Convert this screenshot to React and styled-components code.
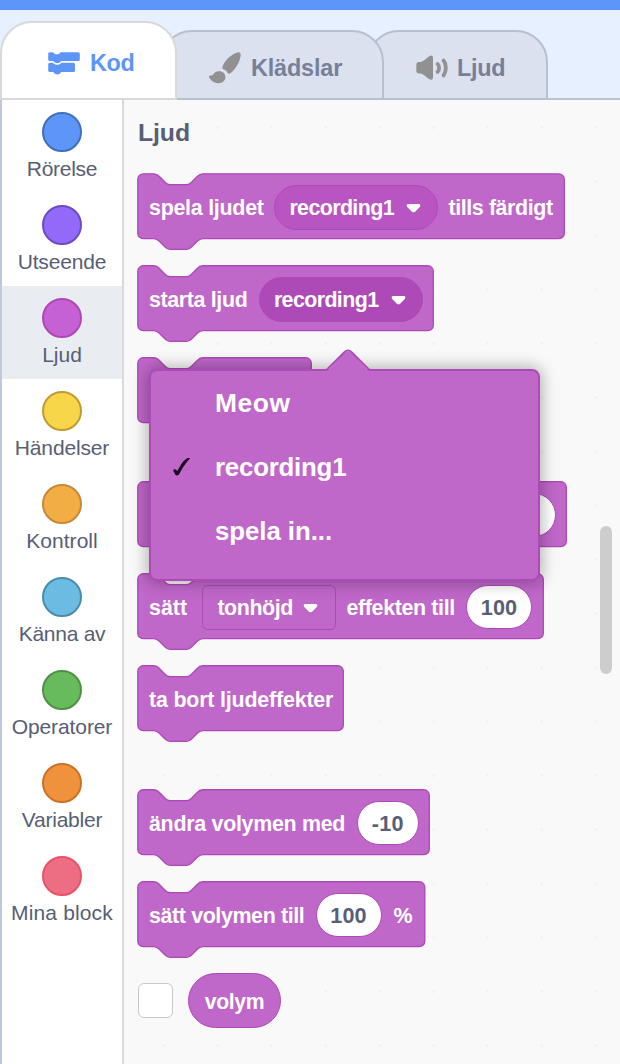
import React from "react";
import styled, { createGlobalStyle } from "styled-components";

const FILL = "#c067ca";
const STROKE = "#ae4ab7";
const INK = "#575e75";

const GlobalStyle = createGlobalStyle`
  * { box-sizing: border-box; }
  body { margin: 0; overflow: hidden; }
`;

const Page = styled.div`
  display: flex;
  flex-direction: column;
  width: 620px;
  height: 1064px;
  overflow: hidden;
  background: #e6f0ff;
  font-family: "Liberation Sans", Helvetica, Arial, sans-serif;
  color: ${INK};
`;

const MenuBar = styled.header`
  flex: none;
  height: 10px;
  background: #5e96f8;
`;

const TabList = styled.nav`
  flex: none;
  display: flex;
  align-items: flex-end;
  height: 90px;
  border-bottom: 2px solid #bcc3d0;
`;

const Tab = styled.div`
  position: relative;
  z-index: ${(p) => p.$z};
  display: flex;
  align-items: center;
  width: ${(p) => p.$w}px;
  height: ${(p) => (p.$active ? 79 : 70)}px;
  margin: 0 0 -2px ${(p) => (p.$active ? 0 : -17)}px;
  padding: ${(p) => (p.$active ? "5px 0 0 46px" : `6px 0 0 ${p.$pad}px`)};
  gap: ${(p) => p.$gap}px;
  border: 2px solid ${(p) => (p.$active ? "#d9d9d9" : "#b9c0cd")};
  border-radius: 32px 32px 0 0;
  background: ${(p) => (p.$active ? "#fff" : "#dbe1ef")};
  color: ${(p) => (p.$active ? "#5e96f8" : "#787f98")};
  font-size: 23.4px;
  font-weight: 700;
  line-height: 28px;
  letter-spacing: ${(p) => p.$ls || 0}px;
  svg { flex: none; display: block; }
`;

const Workspace = styled.main`
  flex: 1;
  display: flex;
  min-height: 0;
`;

const Categories = styled.aside`
  flex: none;
  width: 124px;
  border-left: 2px solid #bfc8dc;
  border-right: 2px solid #d9d9d9;
  background: #fff;
`;

const Category = styled.div`
  display: flex;
  flex-direction: column;
  align-items: center;
  height: 93px;
  padding-top: 12px;
  background: ${(p) => (p.$selected ? "#e9edf1" : "transparent")};
  font-size: 21px;
  line-height: 24px;
  letter-spacing: ${(p) => p.$ls}px;
  white-space: nowrap;
`;

const Bubble = styled.div`
  width: 40px;
  height: 40px;
  margin-bottom: 5px;
  border: 2px solid ${(p) => p.$edge};
  border-radius: 50%;
  background: ${(p) => p.$color};
`;

const Flyout = styled.section`
  position: relative;
  flex: 1;
  padding: 19px 0 0 14px;
  background: #f9f9f9 radial-gradient(circle at 27px 27px, #ededed 0.9px, transparent 1.5px) 12.6px 0.7px / 54px 54px;
`;

const Heading = styled.h2`
  margin: 0 0 27px;
  font-size: 24.8px;
  line-height: 28px;
  font-weight: 700;
  letter-spacing: -0.1px;
`;

const BlockRow = styled.div`
  position: relative;
  display: flex;
  align-items: center;
  width: ${(p) => p.$w}px;
  height: 65px;
  margin-bottom: ${(p) => (p.$last ? 59 : 27)}px;
  padding: 1px 0 0 11px;
  color: #fff;
`;

const Shape = styled.svg`
  position: absolute;
  left: -1px;
  top: -1px;
  overflow: visible;
`;

const Label = styled.span`
  position: relative;
  flex: none;
  width: ${(p) => p.$w}px;
  padding-top: 1px;
  font-size: 21.4px;
  line-height: 26px;
  font-weight: 700;
  letter-spacing: ${(p) => p.$ls || 0}px;
  white-space: nowrap;
`;

const Dropdown = styled.span`
  position: relative;
  flex: none;
  display: flex;
  align-items: center;
  width: ${(p) => p.$w}px;
  height: 45px;
  margin: 0 10.5px 0 ${(p) => p.$ml}px;
  padding-left: 14.4px;
  border: 1.35px solid ${STROKE};
  border-radius: ${(p) => (p.$square ? 5.4 : 23)}px;
  background: ${(p) => p.$bg};
`;

const NumberInput = styled.span`
  position: relative;
  flex: none;
  display: flex;
  align-items: center;
  justify-content: center;
  width: ${(p) => p.$w}px;
  height: 44px;
  margin: 0 12px 0 11.5px;
  padding-top: 1px;
  border: 1.35px solid ${STROKE};
  border-radius: 22px;
  background: #fff;
  color: ${INK};
  font-size: 21.6px;
  font-weight: 700;
  letter-spacing: 0.2px;
`;

const MonitorRow = styled.div`
  display: flex;
  align-items: center;
  gap: 15px;
  margin-top: -33px;
  height: 55px;
`;

const Checkbox = styled.span`
  width: 35px;
  height: 35px;
  border: 1.35px solid #c8c8c8;
  border-radius: 6px;
  background: #fff;
`;

const Reporter = styled.span`
  display: flex;
  align-items: center;
  justify-content: center;
  width: 93px;
  height: 55px;
  padding-top: 2px;
  border: 1.35px solid ${STROKE};
  border-radius: 28px;
  background: ${FILL};
  color: #fff;
  font-size: 21.2px;
  font-weight: 700;
  letter-spacing: -0.35px;
`;

const Popup = styled.div`
  position: absolute;
  left: 25px;
  top: 269px;
  width: 391px;
  height: 212px;
  border: 2px solid ${STROKE};
  border-radius: 8px;
  background: ${FILL};
  box-shadow: 0 0 16px 2px rgba(0, 0, 0, 0.3);
`;

const PopupArrow = styled.svg`
  position: absolute;
  left: 174px;
  top: -22px;
`;

const Option = styled.div`
  display: flex;
  align-items: center;
  height: 64px;
  padding-left: 21px;
  color: #fff;
  font-size: ${(p) => p.$size || 25.8}px;
  font-weight: 700;
  letter-spacing: ${(p) => p.$ls || 0}px;
`;

const CheckSlot = styled.span`
  flex: none;
  display: flex;
  width: 43px;
`;

const Scrollbar = styled.div`
  position: absolute;
  left: 476px;
  top: 426px;
  width: 12px;
  height: 148px;
  border-radius: 6px;
  background: #cdcdcd;
`;

const blockPath = (w) =>
  `M0,4 A4,4 0 0,1 4,0 H12 c2,0 3,1 4,2 l4,4 c1,1 2,2 4,2 h12 c2,0 3,-1 4,-2 l4,-4 c1,-1 2,-2 4,-2 H${w - 4} a4,4 0 0,1 4,4 v40 a4,4 0 0,1 -4,4 H48 c-2,0 -3,1 -4,2 l-4,4 c-1,1 -2,2 -4,2 h-12 c-2,0 -3,-1 -4,-2 l-4,-4 c-1,-1 -2,-2 -4,-2 H4 a4,4 0 0,1 -4,-4 z`;

function Block({ width, last, children }) {
  return (
    <BlockRow $w={width} $last={last}>
      <Shape width={width + 2} height="80">
        <g transform="translate(0.8 0.8) scale(1.35)">
          <path d={blockPath((width - 0.5) / 1.35)} fill={FILL} stroke={STROKE} />
        </g>
      </Shape>
      {children}
    </BlockRow>
  );
}

const Caret = () => (
  <svg width="15" height="17" viewBox="0 0 15 17">
    <path d="M2.2 5.8H12.8C14.4 5.8 14.8 7.6 13.8 8.8L9.2 13.6Q7.5 15.2 5.8 13.6L1.2 8.8C.2 7.6 .6 5.8 2.2 5.8Z" fill="#8f3a98" opacity=".35" />
    <path d="M2.2 5H12.8C14.4 5 14.8 6.8 13.8 8L9.2 12.8Q7.5 14.4 5.8 12.8L1.2 8C.2 6.8 .6 5 2.2 5Z" fill="#fff" />
  </svg>
);

const CodeIcon = () => (
  <svg width="32" height="23" viewBox="0 0 32 23" fill="#5e96f8">
    <path d="M1.8 .2H4.4C5.8 .2 6 2.2 8.8 2.2C11.8 2.2 11.8 .2 13.4 .2H30.2Q31.8 .2 31.8 1.8V7.4Q31.8 9 30.2 9H14.4C12.4 9 12.4 11.2 9.4 11.2C6.2 11.2 6.2 9 4.4 9H1.8Q.2 9 .2 7.4V1.8Q.2 .2 1.8 .2Z" />
    <path d="M1.8 10.8H4C5.8 10.8 6 12.8 9.2 12.8C12.6 12.8 12.4 10.8 14.4 10.8H25.4Q27 10.8 27 12.4V18.4Q27 20 25.4 20H14C12.4 20 12.4 22.4 9.2 22.4C6.2 22.4 6.2 20 4.6 20H1.8Q.2 20 .2 18.4V12.4Q.2 10.8 1.8 10.8Z" />
  </svg>
);

const BrushIcon = () => (
  <svg width="32" height="32" viewBox="0 0 32 32" fill="#919191">
    <path d="M28.6 .5C31 -.2 32 1.4 31.6 4C30.8 9.6 27.4 15.8 22.4 20.6C20.8 22.2 19.2 22 18.2 20.2C17.4 18.9 16.5 18.2 15 17.6C13.3 16.9 12.9 15.6 13.8 13.8C16.8 7.6 22 2.4 28.6 .5Z" />
    <path d="M11.2 19.2C14.6 19.6 16.8 22.6 16.4 26C15.6 30 11.8 31.8 7.6 31C4 30.3 1 28 .1 25C-.2 24 .6 23.3 1.6 23.4C3.6 23.6 4.2 22.8 5 21.6C6.4 19.6 8.6 18.9 11.2 19.2Z" />
  </svg>
);

const SoundIcon = () => (
  <svg width="33" height="26" viewBox="0 0 33 26" fill="#919191">
    <path d="M.3 9.4Q.3 7 2.8 7H4.4Q6.2 6.8 8.2 5.2L12.8 1.4Q17 -.8 17 2.6V22.8Q17 26 12.8 24L8.2 20.2Q6.2 18.6 4.4 18.4H2.8Q.3 18.2 .3 16Z" />
    <path d="M21.6 9C23.6 11 23.6 14.8 21.6 16.8" fill="none" stroke="#919191" strokeWidth="3.8" strokeLinecap="round" />
    <path d="M27.6 5.4C30.6 9.4 30.6 16.2 27.6 20.4" fill="none" stroke="#919191" strokeWidth="3.8" strokeLinecap="round" />
  </svg>
);

const CheckIcon = () => (
  <svg width="20" height="20" viewBox="0 0 20 20">
    <path d="M1 12.9C2.4 11.9 3.8 12 4.4 12.9L5.4 14C8.2 8.4 11.2 3.6 14.6 1.5C16.2 .7 17.6 .9 18 1.4C14 5.2 10.4 11 7.4 16.8C6.4 18.8 4.2 19 3.2 17.5Z" fill="#1d0a20" />
  </svg>
);

const categories = [
  ["Rörelse", "#5e96f8", "#3f70bd", -0.3],
  ["Utseende", "#9269f8", "#6c4cc0", -0.15],
  ["Ljud", "#c561d2", "#ae48b9", 0],
  ["Händelser", "#f8d64a", "#c29a32", -0.15],
  ["Kontroll", "#f3ad45", "#c68a36", 0.05],
  ["Känna av", "#6cbbe2", "#4a8cab", -0.25],
  ["Operatorer", "#67bb5d", "#4d9145", -0.1],
  ["Variabler", "#f0913c", "#cb7128", -0.2],
  ["Mina block", "#ed6e82", "#ea5367", 0.15],
];

export default function App() {
  return (
    <Page>
      <GlobalStyle />
      <MenuBar />
      <TabList>
        <Tab $active $z={3} $w={177} $gap={10} $ls={-0.3}><CodeIcon />Kod</Tab>
        <Tab $z={2} $w={224} $pad={47} $gap={10} $ls={-0.15}><BrushIcon />Klädslar</Tab>
        <Tab $z={1} $w={181} $pad={47} $gap={8} $ls={-0.25}><SoundIcon />Ljud</Tab>
      </TabList>
      <Workspace>
        <Categories>
          {categories.map(([name, color, edge, ls]) => (
            <Category key={name} $selected={name === "Ljud"} $ls={ls}>
              <Bubble $color={color} $edge={edge} />
              {name}
            </Category>
          ))}
        </Categories>
        <Flyout>
          <Heading>Ljud</Heading>
          <Block width={427}>
            <Label $w={115} $ls={-0.25}>spela ljudet</Label>
            <Dropdown $w={164} $ml={10} $bg="#b954c3"><Label $w={117} $ls={-0.6}>recording1</Label><Caret /></Dropdown>
            <Label $w={104} $ls={-0.4}>tills färdigt</Label>
          </Block>
          <Block width={296}>
            <Label $w={99} $ls={-0.35}>starta ljud</Label>
            <Dropdown $w={164} $ml={10.5} $bg={STROKE}><Label $w={117} $ls={-0.6}>recording1</Label><Caret /></Dropdown>
          </Block>
          <Block width={174} last />
          <Block width={429}>
            <Label $w={341} />
            <NumberInput $w={54} />
          </Block>
          <Block width={406}>
            <Label $w={43}>sätt</Label>
            <Dropdown $square $w={134} $ml={10} $bg={FILL}><Label $w={86} $ls={-0.4}>tonhöjd</Label><Caret /></Dropdown>
            <Label $w={108} $ls={-0.35}>effekten till</Label>
            <NumberInput $w={66}>100</NumberInput>
          </Block>
          <Block width={206} last>
            <Label $w={185} $ls={-0.18}>ta bort ljudeffekter</Label>
          </Block>
          <Block width={292}>
            <Label $w={196} $ls={-0.28}>ändra volymen med</Label>
            <NumberInput $w={62.5}>-10</NumberInput>
          </Block>
          <Block width={287.5} last>
            <Label $w={155} $ls={-0.37}>sätt volymen till</Label>
            <NumberInput $w={66}>100</NumberInput>
            <Label $w={20}>%</Label>
          </Block>
          <MonitorRow>
            <Checkbox />
            <Reporter>volym</Reporter>
          </MonitorRow>
          <Popup>
            <PopupArrow width="46" height="24" viewBox="0 0 46 24">
              <path d="M0 24V22L1 22Q2 22 3 21L19 4.5Q23 .5 27 4.5L43 21Q44 22 45 22L46 22V24Z" fill={FILL} />
              <path d="M0 21H1.5L19.4 3.2Q23 -.2 26.6 3.2L44.5 21H46" fill="none" stroke={STROKE} strokeWidth="2" />
            </PopupArrow>
            <Option $size={26.4} $ls={0.6}><CheckSlot />Meow</Option>
            <Option $ls={-0.2}><CheckSlot><CheckIcon /></CheckSlot>recording1</Option>
            <Option $ls={-0.05}><CheckSlot />spela in...</Option>
          </Popup>
          <Scrollbar />
        </Flyout>
      </Workspace>
    </Page>
  );
}
